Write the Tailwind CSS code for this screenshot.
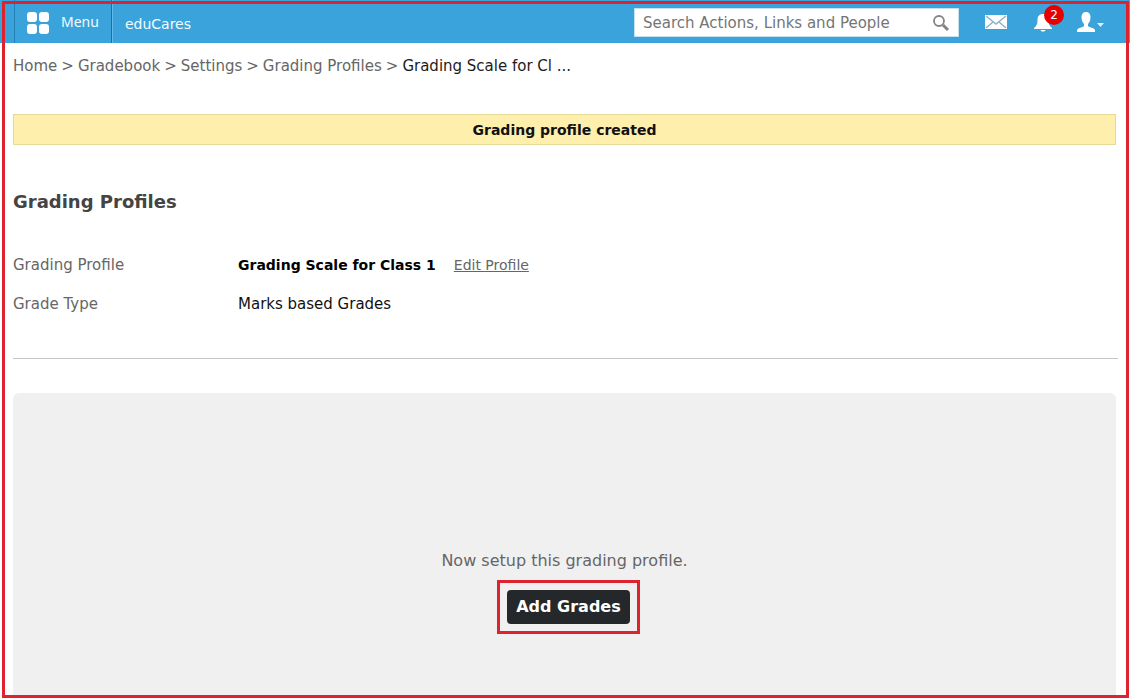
<!DOCTYPE html>
<html lang="en">
<head>
<meta charset="utf-8">
<meta name="viewport" content="width=device-width, initial-scale=1">
<title>Grading Profiles</title>
<script src="https://cdn.jsdelivr.net/npm/@tailwindcss/browser@4"></script>
</head>
<body class="flex min-h-screen flex-col bg-white font-['DejaVu_Sans',sans-serif] text-[15px] leading-5 text-[#666]">
<div class="pointer-events-none fixed top-px right-px bottom-px left-[2px] z-10 border-3 border-[#dd242e]"></div>

<header class="flex h-[43px] shrink-0 items-stretch bg-[#3aa3dc] pl-[14px] text-[#f2fdff]">
  <button type="button" class="flex items-center gap-3 border-x border-r-[#1b6fa3] border-l-[#247fb5] px-3 font-['Noto_Sans',sans-serif] text-sm">
    <svg class="mt-[3px] h-6 w-[22px]" viewBox="0 0 22 24" fill="#fff" aria-hidden="true"><rect x="0" y="1" width="10" height="10" rx="3"/><rect x="12" y="1" width="10" height="10" rx="3"/><rect x="0" y="13" width="10" height="10" rx="3"/><rect x="12" y="13" width="10" height="10" rx="3"/></svg>
    Menu
  </button>
  <a href="#" class="flex items-center border-l border-[#62baea] pt-1 pl-3 text-sm">eduCares</a>
  <form class="mt-2 mb-[6px] ml-auto flex w-[325px] items-center border border-[#c5dfed] bg-white px-2">
    <input type="text" aria-label="Search" placeholder="Search Actions, Links and People" class="min-w-0 flex-1 text-[15px] text-[#555] outline-none placeholder:text-[#757575]">
    <button type="submit" aria-label="Submit search" class="pt-px">
      <svg class="size-[18px]" viewBox="0 0 18 18" fill="none" stroke="#858585" aria-hidden="true"><circle cx="7" cy="7" r="5" stroke-width="1.8"/><path d="M11 11l5 5" stroke-width="3"/></svg>
    </button>
  </form>
  <nav class="flex items-center px-[26px]">
    <a href="#" aria-label="Messages">
      <svg class="h-4 w-[22px]" viewBox="0 0 22 16" aria-hidden="true"><path d="M0 1h22v14H0z" fill="#fff"/><path d="M1 2l10 8L21 2M1 14l7-6M21 14l-7-6" fill="none" stroke="#8bb1c9" stroke-width="1.4"/></svg>
    </a>
    <a href="#" aria-label="Notifications, 2 new" class="relative ml-[27px] pt-[2px]">
      <svg class="h-5 w-[18px]" viewBox="0 0 18 20" fill="#fff" aria-hidden="true"><path d="M9 1c-4 0-5.500 2.500-5.500 6 0 4-1 6-3.500 8v1h18v-1c-2.500-2-3.500-4-3.500-8 0-3.500-1.500-6-5.500-6zM6.500 17h5c-.5 2-4.500 2-5 0z"/></svg>
      <span class="absolute -top-[6px] left-[10px] flex size-5 items-center justify-center rounded-full bg-[#e80000] text-xs">2</span>
    </a>
    <button type="button" aria-label="Account" class="ml-[25px] flex items-center gap-[2px]">
      <svg class="h-[22px] w-[18px]" viewBox="0 0 18 22" fill="#fff" aria-hidden="true"><path d="M9 1C6 1 4.500 3 4.500 6c0 3 .8 5 2.500 7v2c-1 1.500-6 1.500-7 4v2h18v-2c-1-2.500-6-2.500-7-4v-2c1.700-2 2.500-4 2.500-7C13.500 3 12 1 9 1z"/></svg>
      <svg class="mt-[6px] h-1 w-[7px]" viewBox="0 0 7 4" fill="#d5f3ff" aria-hidden="true"><path d="M0 0h7L3.500 4z"/></svg>
    </button>
  </nav>
</header>

<main class="flex flex-1 flex-col pr-[14px] pl-[13px]">
  <nav aria-label="Breadcrumb" class="mt-[13px]">
    <ol class="flex gap-1">
      <li class="flex gap-1"><a href="#">Home</a><span>&gt;</span></li>
      <li class="flex gap-1"><a href="#">Gradebook</a><span>&gt;</span></li>
      <li class="flex gap-1"><a href="#">Settings</a><span>&gt;</span></li>
      <li class="flex gap-1"><a href="#">Grading Profiles</a><span>&gt;</span></li>
      <li class="text-[#1c1c1c]" aria-current="page">Grading Scale for Cl ...</li>
    </ol>
  </nav>

  <p role="status" class="mt-[38px] border border-[#e5da98] bg-[#feefad] pt-[5px] pb-1 text-center text-sm leading-5 font-bold text-[#111]">Grading profile created</p>

  <h1 class="mt-[45px] text-lg leading-6 font-bold text-[#444]">Grading Profiles</h1>

  <dl class="mt-[41px] grid grid-cols-[225px_1fr] gap-y-[19px]">
    <dt>Grading Profile</dt>
    <dd class="flex items-baseline gap-[18px]"><strong class="text-sm text-black">Grading Scale for Class 1</strong><a href="#" class="text-sm underline">Edit Profile</a></dd>
    <dt>Grade Type</dt>
    <dd class="text-[#111]">Marks based Grades</dd>
  </dl>

  <hr class="mt-11 -mr-[2px] border-[#c6c6c6]">

  <section class="mt-[34px] mb-1 flex flex-1 flex-col items-center rounded-t-md bg-[#f0f0f0] pt-[156px] text-base">
    <p>Now setup this grading profile.</p>
    <div class="mt-[7px] ml-2 border-3 border-[#dd242e] p-[7px]">
      <button type="button" class="rounded-sm bg-[#25282a] px-[9px] py-[5px] font-bold text-white">Add Grades</button>
    </div>
  </section>
</main>
</body>
</html>
